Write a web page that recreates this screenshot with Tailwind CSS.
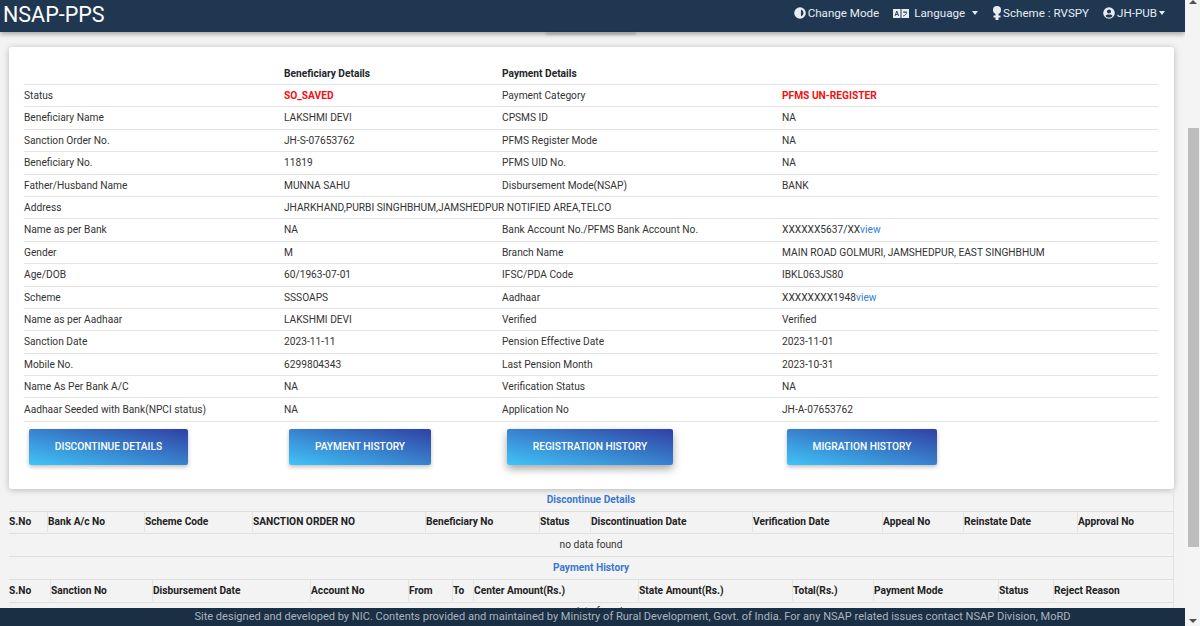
<!DOCTYPE html>
<html lang="en">
<head>
    <meta charset="UTF-8">
    <title>NSAP-PPS</title>
    <script src="https://cdn.jsdelivr.net/npm/@tailwindcss/browser@4"></script>
</head>
<body class="h-[626px] w-[1200px] overflow-hidden bg-[#f3f3f3] font-['Roboto',sans-serif] text-[10.2px] text-[#212529]">
<div class="flex h-[626px]">
    <div class="relative flex h-full w-[1185px] flex-col overflow-hidden">
        <!-- Navbar -->
        <nav class="flex h-[32px] shrink-0 items-center justify-between bg-[#1f3751] pl-[3px] pr-[20px] text-white shadow-[0_2px_5px_rgba(0,0,0,0.35)]">
            <span class="pb-[3px] text-[21.5px] leading-none">NSAP-PPS</span>
            <div class="flex items-center pb-[5px] text-[11.6px] text-[#e8edf2]">
                <span class="flex items-center gap-[2px]">
                    <svg class="h-[12px] w-[12px]" viewBox="0 0 512 512" fill="currentColor"><path d="M256 8a248 248 0 1 0 0 496 248 248 0 0 0 0-496zm40 400V104a160 160 0 0 1 0 304z"/></svg>
                    Change Mode
                </span>
                <span class="ml-[14px] flex items-center">
                    <svg class="h-[13px] w-[16px]" viewBox="0 0 16 13"><rect y="2" width="7.500" height="9" fill="#e8edf2"/><rect x="8.500" y="2" width="7.500" height="9" fill="#e8edf2"/><path d="M2 9l1.800-5L5.600 9M2.800 7.500h2M10 5h4M12 5v1M13.600 5.500c-.4 2-1.800 3-3.400 3.500" fill="none" stroke="#1f3751" stroke-width=".9"/></svg>
                    <span class="ml-[5px]">Language</span>
                    <span class="ml-[7px] h-0 w-0 border-x-[3.500px] border-t-[4px] border-x-transparent border-t-[#e8edf2]"></span>
                </span>
                <span class="ml-[15px] flex items-center">
                    <svg class="h-[14px] w-[8px]" viewBox="0 0 8 14" fill="currentColor"><circle cx="4" cy="4" r="4"/><rect x="2.500" y="7" width="3" height="7"/><rect x="0.500" y="9.500" width="7" height="2"/></svg>
                    <span class="ml-[2px]">Scheme : RVSPY</span>
                </span>
                <span class="ml-[14px] flex items-center">
                    <svg class="h-[12px] w-[12px]" viewBox="0 0 496 512" fill="currentColor"><path d="M248 8a248 248 0 1 0 0 496 248 248 0 0 0 0-496zm0 96a88 88 0 1 1 0 176 88 88 0 0 1 0-176zm0 344c-59 0-111-27-146-69 18-35 55-59 98-59h10c13 4 26 6 38 6s25-2 38-6h10c43 0 80 24 98 59-35 42-87 69-146 69z"/></svg>
                    <span class="ml-[2px]">JH-PUB</span>
                    <span class="ml-[2px] h-0 w-0 border-x-[3.500px] border-t-[4px] border-x-transparent border-t-[#e8edf2]"></span>
                </span>
            </div>
        </nav>
        <!-- shadow of something scrolled under the navbar -->
        <div class="absolute left-[546px] top-[32px] h-[3px] w-[90px] bg-black/15 blur-[1px]"></div>

        <div class="pl-[9px] pr-[11px] pt-[15px]">
            <!-- Details card -->
            <section class="h-[442px] rounded-[3px] bg-white pl-[15px] pr-[16px] pt-[17px] shadow-[0_1px_6px_rgba(0,0,0,0.25)]">
                <div class="grid h-[21px] grid-cols-[260px_218px_280px_376px] items-center border-b border-[#e3e3e3] font-bold text-[#212529]">
                    <span></span><span>Beneficiary Details</span><span>Payment Details</span><span></span>
                </div>
                <div class="divide-y divide-[#e3e3e3] border-b border-[#e3e3e3] text-[#333]">
                    <div class="grid h-[22.4px] grid-cols-[260px_218px_280px_376px] items-center"><span>Status</span><span class="font-bold text-[#f01111]">SO_SAVED</span><span>Payment Category</span><span class="font-bold text-[#f01111]">PFMS UN-REGISTER</span></div>
                    <div class="grid h-[22.4px] grid-cols-[260px_218px_280px_376px] items-center"><span>Beneficiary Name</span><span>LAKSHMI DEVI</span><span>CPSMS ID</span><span>NA</span></div>
                    <div class="grid h-[22.4px] grid-cols-[260px_218px_280px_376px] items-center"><span>Sanction Order No.</span><span>JH-S-07653762</span><span>PFMS Register Mode</span><span>NA</span></div>
                    <div class="grid h-[22.4px] grid-cols-[260px_218px_280px_376px] items-center"><span>Beneficiary No.</span><span>11819</span><span>PFMS UID No.</span><span>NA</span></div>
                    <div class="grid h-[22.4px] grid-cols-[260px_218px_280px_376px] items-center"><span>Father/Husband Name</span><span>MUNNA SAHU</span><span>Disbursement Mode(NSAP)</span><span>BANK</span></div>
                    <div class="grid h-[22.4px] grid-cols-[260px_874px] items-center"><span>Address</span><span>JHARKHAND,PURBI SINGHBHUM,JAMSHEDPUR NOTIFIED AREA,TELCO</span></div>
                    <div class="grid h-[22.4px] grid-cols-[260px_218px_280px_376px] items-center"><span>Name as per Bank</span><span>NA</span><span>Bank Account No./PFMS Bank Account No.</span><span>XXXXXX5637/XX<a class="text-[#2f7fd6]">view</a></span></div>
                    <div class="grid h-[22.4px] grid-cols-[260px_218px_280px_376px] items-center"><span>Gender</span><span>M</span><span>Branch Name</span><span>MAIN ROAD GOLMURI, JAMSHEDPUR, EAST SINGHBHUM</span></div>
                    <div class="grid h-[22.4px] grid-cols-[260px_218px_280px_376px] items-center"><span>Age/DOB</span><span>60/1963-07-01</span><span>IFSC/PDA Code</span><span>IBKL063JS80</span></div>
                    <div class="grid h-[22.4px] grid-cols-[260px_218px_280px_376px] items-center"><span>Scheme</span><span>SSSOAPS</span><span>Aadhaar</span><span>XXXXXXXX1948<a class="text-[#2f7fd6]">view</a></span></div>
                    <div class="grid h-[22.4px] grid-cols-[260px_218px_280px_376px] items-center"><span>Name as per Aadhaar</span><span>LAKSHMI DEVI</span><span>Verified</span><span>Verified</span></div>
                    <div class="grid h-[22.4px] grid-cols-[260px_218px_280px_376px] items-center"><span>Sanction Date</span><span>2023-11-11</span><span>Pension Effective Date</span><span>2023-11-01</span></div>
                    <div class="grid h-[22.4px] grid-cols-[260px_218px_280px_376px] items-center"><span>Mobile No.</span><span>6299804343</span><span>Last Pension Month</span><span>2023-10-31</span></div>
                    <div class="grid h-[22.4px] grid-cols-[260px_218px_280px_376px] items-center"><span>Name As Per Bank A/C</span><span>NA</span><span>Verification Status</span><span>NA</span></div>
                    <div class="grid h-[22.4px] grid-cols-[260px_218px_280px_376px] items-center"><span>Aadhaar Seeded with Bank(NPCI status)</span><span>NA</span><span>Application No</span><span>JH-A-07653762</span></div>
                </div>
                <div class="mt-[7px] grid grid-cols-[260px_218px_280px_371px] pl-[5px] font-medium text-white">
                    <a class="flex h-[36px] w-[159px] items-center justify-center rounded-[2px] bg-[linear-gradient(to_top_right,#40c4f8,#3040a3)] shadow-[0_2px_4px_rgba(0,0,0,0.25)]">DISCONTINUE DETAILS</a>
                    <a class="flex h-[36px] w-[142px] items-center justify-center rounded-[2px] bg-[linear-gradient(to_top_right,#40c4f8,#3040a3)] shadow-[0_2px_4px_rgba(0,0,0,0.25)]">PAYMENT HISTORY</a>
                    <a class="flex h-[36px] w-[166px] items-center justify-center rounded-[2px] bg-[linear-gradient(to_top_right,#40c4f8,#3040a3)] shadow-[0_4px_8px_rgba(0,0,0,0.35)]">REGISTRATION HISTORY</a>
                    <a class="flex h-[36px] w-[150px] items-center justify-center rounded-[2px] bg-[linear-gradient(to_top_right,#40c4f8,#3040a3)] shadow-[0_2px_4px_rgba(0,0,0,0.25)]">MIGRATION HISTORY</a>
                </div>
            </section>

            <!-- History tables -->
            <section class="w-[1165px] border-r border-[#e3e3e3]">
                <div class="flex h-[23px] items-center justify-center border-b border-[#dedede] font-bold text-[#3b78d0]">Discontinue Details</div>
                <div class="grid h-[22px] grid-cols-[38px_97px_108px_173px_114px_51px_162px_130px_81px_114px_97px] border-b border-[#dedede] pb-px font-bold text-[#222]">
                    <span class="flex items-center">S.No</span>
                    <span class="flex items-center border-l border-[#e3e3e3]">Bank A/c No</span>
                    <span class="flex items-center border-l border-[#e3e3e3]">Scheme Code</span>
                    <span class="flex items-center border-l border-[#e3e3e3]">SANCTION ORDER NO</span>
                    <span class="flex items-center border-l border-[#e3e3e3]">Beneficiary No</span>
                    <span class="flex items-center border-l border-[#e3e3e3]">Status</span>
                    <span class="flex items-center border-l border-[#e3e3e3]">Discontinuation Date</span>
                    <span class="flex items-center border-l border-[#e3e3e3]">Verification Date</span>
                    <span class="flex items-center border-l border-[#e3e3e3]">Appeal No</span>
                    <span class="flex items-center border-l border-[#e3e3e3]">Reinstate Date</span>
                    <span class="flex items-center border-l border-[#e3e3e3]">Approval No</span>
                </div>
                <div class="flex h-[23px] items-center justify-center border-b border-[#dedede] text-[#333]">no data found</div>
                <div class="flex h-[23px] items-center justify-center border-b border-[#dedede] font-bold text-[#3b78d0]">Payment History</div>
                <div class="grid h-[23px] grid-cols-[41px_102px_158px_98px_44px_21px_165px_154px_81px_125px_55px_121px] border-b border-[#dedede] pb-px font-bold text-[#222]">
                    <span class="flex items-center">S.No</span>
                    <span class="flex items-center border-l border-[#e3e3e3]">Sanction No</span>
                    <span class="flex items-center border-l border-[#e3e3e3]">Disbursement Date</span>
                    <span class="flex items-center border-l border-[#e3e3e3]">Account No</span>
                    <span class="flex items-center border-l border-[#e3e3e3]">From</span>
                    <span class="flex items-center border-l border-[#e3e3e3]">To</span>
                    <span class="flex items-center border-l border-[#e3e3e3]">Center Amount(Rs.)</span>
                    <span class="flex items-center border-l border-[#e3e3e3]">State Amount(Rs.)</span>
                    <span class="flex items-center border-l border-[#e3e3e3]">Total(Rs.)</span>
                    <span class="flex items-center border-l border-[#e3e3e3]">Payment Mode</span>
                    <span class="flex items-center border-l border-[#e3e3e3]">Status</span>
                    <span class="flex items-center border-l border-[#e3e3e3]">Reject Reason</span>
                </div>
                <div class="flex h-[17px] items-center justify-center text-[#333]">no data found</div>
            </section>
        </div>

        <!-- Footer -->
        <footer class="absolute inset-x-0 bottom-0 flex h-[18px] items-center justify-center bg-[#1a2f44] pl-[80px] text-[11.05px] text-[#aab4be]">
            Site designed and developed by NIC. Contents provided and maintained by Ministry of Rural Development, Govt. of India. For any NSAP related issues contact NSAP Division, MoRD
        </footer>
    </div>

    <!-- Scrollbar -->
    <div class="flex w-[15px] flex-col items-center justify-between bg-[#f4f4f4]">
        <div class="flex w-full flex-col items-center">
            <span class="h-0 w-0 border-x-[4px] border-b-[4px] border-x-transparent border-b-[#505050]"></span>
            <div class="ml-[2px] mt-[124px] h-[419px] w-[11px] bg-[#bdbdbd]"></div>
        </div>
        <span class="mb-[3px] h-0 w-0 border-x-[4px] border-t-[4px] border-x-transparent border-t-[#505050]"></span>
    </div>
</div>
</body>
</html>
